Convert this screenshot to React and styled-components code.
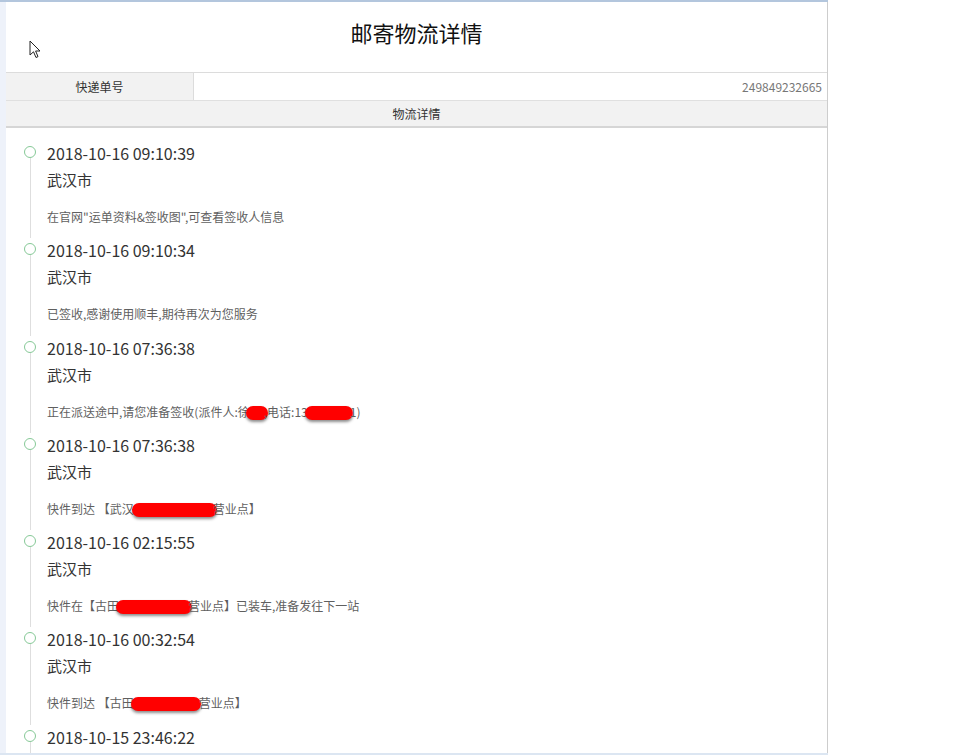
import React from 'react'
import styled, { createGlobalStyle } from 'styled-components'

const GlobalStyle = createGlobalStyle`
  html, body {
    margin: 0;
    padding: 0;
    background: #fff;
  }
  body {
    font-family: "Microsoft YaHei", "Noto Sans CJK SC", sans-serif;
  }
`

const Frame = styled.div`
  width: 828px;
  height: 755px;
  box-sizing: border-box;
  display: flex;
  border-top: 2px solid #b3c6dd;
  border-bottom: 2px solid #dce6f2;
  overflow: hidden;
`

const SideStrip = styled.div`
  width: 6px;
  flex: none;
  background: #eef2fa;
`

const Main = styled.div`
  flex: 1;
  min-width: 0;
  border-right: 1px solid #cdcdcd;
  overflow: hidden;
`

const TitleBar = styled.div`
  position: relative;
  height: 70px;
  box-sizing: border-box;
  padding-top: 16px;
  text-align: center;
  font-size: 22px;
  line-height: 28px;
  color: #111;
`

const Cursor = styled.svg`
  position: absolute;
  left: 23px;
  top: 38px;
`

const InfoRow = styled.div`
  display: flex;
  height: 29px;
  box-sizing: border-box;
  border-top: 1px solid #dcdcdc;
  border-bottom: 1px solid #e0e0e0;
  font-size: 12px;
  line-height: 27px;
`

const LabelCell = styled.div`
  width: 188px;
  flex: none;
  box-sizing: border-box;
  border-right: 1px solid #dcdcdc;
  background: #f2f2f2;
  color: #333;
  text-align: center;
`

const ValueCell = styled.div`
  flex: 1;
  padding-right: 5px;
  text-align: right;
  color: #777;
  font-size: 12px;
`

const SectionHead = styled.div`
  height: 27px;
  box-sizing: border-box;
  background: #f2f2f2;
  border-bottom: 2px solid #d6d6d6;
  text-align: center;
  font-size: 12px;
  line-height: 25px;
  color: #333;
`

const Timeline = styled.div`
  padding-top: 13px;
`

const Entry = styled.div`
  display: flex;
`

const Rail = styled.div`
  width: 41px;
  flex: none;
  box-sizing: border-box;
  padding-left: 18px;
  display: flex;
  flex-direction: column;
`

const Dot = styled.span`
  width: 12px;
  height: 12px;
  margin-top: 5px;
  box-sizing: border-box;
  border: 1.5px solid #86c997;
  border-radius: 50%;
  background: #fff;
`

const RailLine = styled.span`
  flex: 1;
  width: 1px;
  margin-left: 5.5px;
  background: #dedede;
`

const Body = styled.div`
  padding-bottom: 11.3px;
`

const Stamp = styled.div`
  font-size: 16px;
  line-height: 24px;
  color: #333;
`

const City = styled.div`
  font-size: 15px;
  line-height: 30px;
  color: #333;
`

const Note = styled.div`
  margin-top: 12px;
  font-size: 12px;
  line-height: 20px;
  color: #5f5f5f;
  white-space: nowrap;
`

// red marker stroke hiding personal data
const Redact = styled.span`
  display: inline-block;
  width: ${p => p.w}px;
  height: 14px;
  margin-left: ${p => p.ml || 0}px;
  margin-right: ${p => p.mr || 0}px;
  vertical-align: -3px;
  background: #ff0000;
  border-radius: 7px;
  box-shadow: 0 2px 3px rgba(0, 0, 0, 0.45);
`

const entries = [
  {
    time: '2018-10-16 09:10:39',
    city: '武汉市',
    note: <>在官网"运单资料&amp;签收图",可查看签收人信息</>,
  },
  {
    time: '2018-10-16 09:10:34',
    city: '武汉市',
    note: <>已签收,感谢使用顺丰,期待再次为您服务</>,
  },
  {
    time: '2018-10-16 07:36:38',
    city: '武汉市',
    note: (
      <>
        正在派送途中,请您准备签收(派件人:徐<Redact w={22} ml={-4} mr={-4} />,电话:13<Redact w={48} ml={-3} mr={-3} />1)
      </>
    ),
  },
  {
    time: '2018-10-16 07:36:38',
    city: '武汉市',
    note: (
      <>
        快件到达 【武汉<Redact w={85} ml={-2} mr={-4} />营业点】
      </>
    ),
  },
  {
    time: '2018-10-16 02:15:55',
    city: '武汉市',
    note: (
      <>
        快件在【古田<Redact w={76} ml={-3} mr={-4} />营业点】已装车,准备发往下一站
      </>
    ),
  },
  {
    time: '2018-10-16 00:32:54',
    city: '武汉市',
    note: (
      <>
        快件到达 【古田<Redact w={70} ml={-3} mr={-2} />营业点】
      </>
    ),
  },
  {
    time: '2018-10-15 23:46:22',
  },
]

function PointerIcon() {
  return (
    <Cursor width="14" height="20" viewBox="0 0 14 20">
      <path
        d="M1 1 L1 15 L4.5 11.8 L7 17.5 L9 16.6 L6.6 11 L11 11 Z"
        fill="#fff"
        stroke="#222"
        strokeWidth="1"
        strokeLinejoin="round"
      />
    </Cursor>
  )
}

export default function App() {
  return (
    <>
      <GlobalStyle />
      <Frame>
        <SideStrip />
        <Main>
          <TitleBar>
            <PointerIcon />
            邮寄物流详情
          </TitleBar>
          <InfoRow>
            <LabelCell>快递单号</LabelCell>
            <ValueCell>249849232665</ValueCell>
          </InfoRow>
          <SectionHead>物流详情</SectionHead>
          <Timeline>
            {entries.map((item, i) => (
              <Entry key={i}>
                <Rail>
                  <Dot />
                  <RailLine />
                </Rail>
                <Body>
                  <Stamp>{item.time}</Stamp>
                  {item.city && <City>{item.city}</City>}
                  {item.note && <Note>{item.note}</Note>}
                </Body>
              </Entry>
            ))}
          </Timeline>
        </Main>
      </Frame>
    </>
  )
}
